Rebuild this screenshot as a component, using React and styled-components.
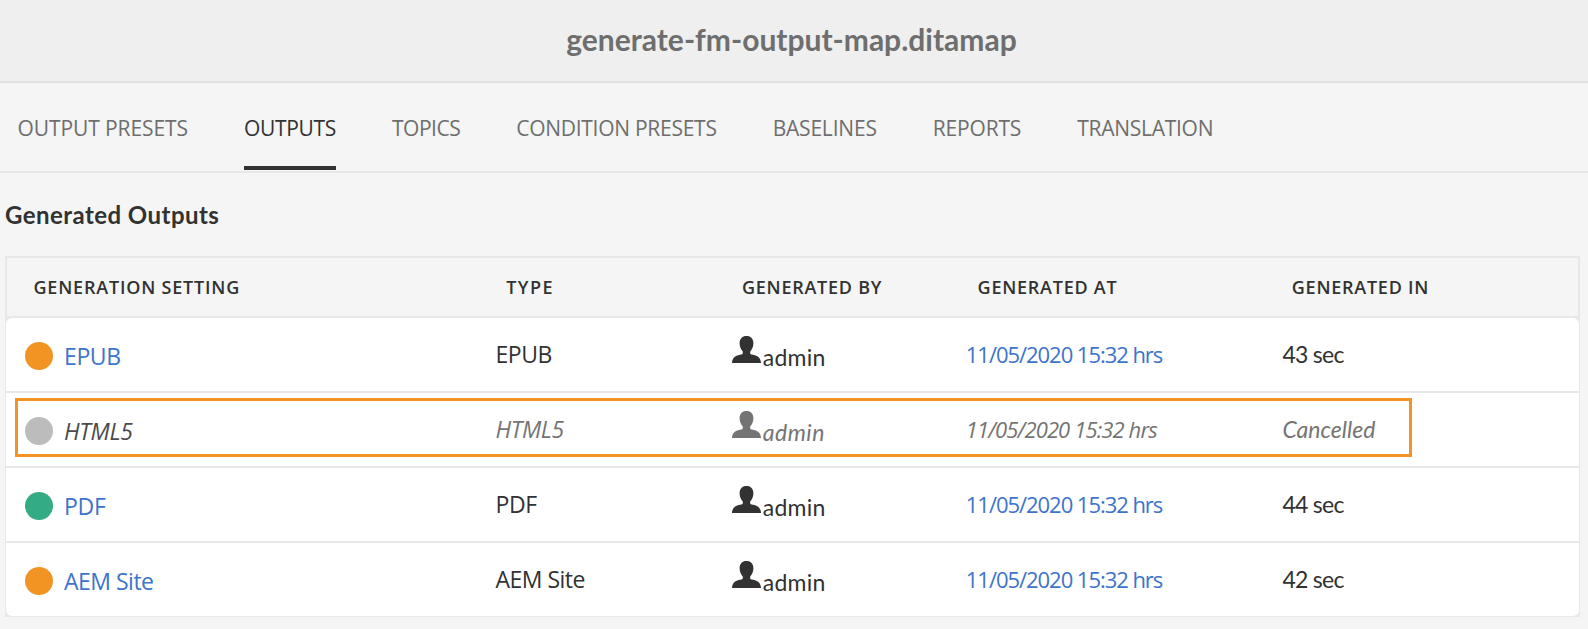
import React from "react";
import styled, { createGlobalStyle, css } from "styled-components";

const colors = {
  page: "#f5f5f5",
  header: "#efefef",
  headerLine: "#e1e1e1",
  line: "#e8e8e8",
  text: "#323232",
  muted: "#6e6e6e",
  disabled: "#747474",
  link: "#3d74cc",
  orange: "#f29423",
  green: "#33ab84",
  gray: "#bcbcbc",
};

const caps = `"Open Sans", "Noto Sans", sans-serif`;
const prose = `Lato, "Open Sans", sans-serif`;

const GlobalStyle = createGlobalStyle`
  *, *::before, *::after { box-sizing: border-box; }
  body {
    margin: 0;
    background: ${colors.page};
    color: ${colors.text};
    font-family: ${caps};
  }
`;

const Page = styled.div`
  min-height: 629px;
  display: flex;
  flex-direction: column;
  overflow: hidden;
`;

const TitleBar = styled.header`
  height: 83px;
  display: flex;
  align-items: center;
  justify-content: center;
  padding: 0 5px 3px 0;
  background: ${colors.header};
  border-bottom: 2px solid ${colors.headerLine};
`;

const Title = styled.h1`
  margin: 0;
  font: 700 30px/36px ${prose};
  color: ${colors.muted};
`;

const TabBar = styled.nav`
  height: 90px;
  display: flex;
  gap: 56px;
  padding: 0 17.5px 1px;
  border-bottom: 2px solid ${colors.line};
`;

const Tab = styled.a`
  display: flex;
  align-items: center;
  padding-top: 7px;
  border-bottom: 4px solid ${(p) => (p.$active ? colors.text : "transparent")};
  color: ${(p) => (p.$active ? colors.text : colors.muted)};
  font-size: 21px;
  line-height: 28px;
  letter-spacing: ${(p) => p.$track}px;
  white-space: nowrap;
`;

const Section = styled.main`
  padding: 26px 8px 12px 5px;
`;

const Heading = styled.h2`
  margin: 0 0 25px;
  font: 700 24px/32px ${prose};
  letter-spacing: 0.45px;
`;

const Table = styled.div`
  background: ${colors.line};
  padding: 0 1px 1px;
`;

const columns = css`
  display: grid;
  grid-template-columns: 30fr 15fr 15fr 20fr 20fr;
`;

const HeadRow = styled.div`
  ${columns}
  height: 62px;
  margin: 0 -1px;
  align-items: center;
  background: ${colors.page};
  border: 2px solid ${colors.line};
`;

const HeadCell = styled.div`
  padding-left: ${(p) => p.$pad || 28}px;
  font-size: 18px;
  font-weight: 600;
  line-height: 24px;
  letter-spacing: ${(p) => p.$track}px;
  white-space: nowrap;
`;

const Body = styled.div`
  background: #fff;
  border-radius: 6px;
`;

const Row = styled.div`
  ${columns}
  position: relative;
  height: 75px;
  align-items: center;
  border-bottom: 2px solid ${colors.line};
  color: ${(p) => (p.$cancelled ? colors.disabled : colors.text)};
  font-style: ${(p) => (p.$cancelled ? "italic" : "normal")};

  &:last-child {
    height: 73px;
    border-bottom: 0;
  }
`;

const Cell = styled.div`
  padding: 0 0 2px 17.5px;
  font-family: ${(p) => (p.$prose ? prose : caps)};
  font-size: 23px;
  line-height: 32px;
  letter-spacing: ${(p) => p.$track || 0}px;
  white-space: nowrap;
`;

const NameCell = styled(Cell)`
  display: flex;
  align-items: center;
  gap: 11px;
  padding: 3px 0 0 19px;
`;

const Dot = styled.span`
  width: 28px;
  height: 28px;
  border-radius: 50%;
  background: ${(p) => p.$color};
`;

const Name = styled.span`
  color: ${(p) => (p.$cancelled ? "#4b4b4b" : colors.link)};
`;

const DateCell = styled(Cell)`
  padding-left: 16px;
  font-size: 22px;
  color: ${(p) => (p.$cancelled ? colors.disabled : colors.link)};
`;

const DurationCell = styled(Cell)`
  padding-left: 18px;
`;

const UserCell = styled(Cell)`
  display: flex;
  align-items: flex-end;
  gap: 1.5px;
  padding: 0 0 1px 18.5px;
`;

const UserIcon = styled.svg`
  width: 29px;
  height: 27px;
  margin-bottom: 10px;
  fill: currentColor;
`;

const Callout = styled.div`
  position: absolute;
  left: 9px;
  top: 5px;
  width: 1397px;
  height: 59px;
  border: 3px solid ${colors.orange};
`;

const tabs = [
  { label: "OUTPUT PRESETS", track: -0.09 },
  { label: "OUTPUTS", track: -0.31, active: true },
  { label: "TOPICS", track: -0.5 },
  { label: "CONDITION PRESETS", track: -0.27 },
  { label: "BASELINES", track: -0.2 },
  { label: "REPORTS", track: -0.16 },
  { label: "TRANSLATION", track: -0.27 },
];

const headings = [
  { label: "GENERATION SETTING", track: 0.8, pad: 26.5 },
  { label: "TYPE", track: 1.4 },
  { label: "GENERATED BY", track: 0.75 },
  { label: "GENERATED AT", track: 0.75 },
  { label: "GENERATED IN", track: 0.75 },
];

const outputs = [
  { name: "EPUB", color: colors.orange, track: -0.4, duration: "43 sec" },
  { name: "HTML5", color: colors.gray, track: -0.3, duration: "Cancelled", cancelled: true },
  { name: "PDF", color: colors.green, track: -0.3, duration: "44 sec" },
  { name: "AEM Site", color: colors.orange, track: -0.5, duration: "42 sec" },
];

export default function App() {
  return (
    <Page>
      <GlobalStyle />
      <TitleBar>
        <Title>generate-fm-output-map.ditamap</Title>
      </TitleBar>
      <TabBar>
        {tabs.map((t) => (
          <Tab key={t.label} $active={t.active} $track={t.track}>{t.label}</Tab>
        ))}
      </TabBar>
      <Section>
        <Heading>Generated Outputs</Heading>
        <Table>
          <HeadRow>
            {headings.map((h) => (
              <HeadCell key={h.label} $track={h.track} $pad={h.pad}>{h.label}</HeadCell>
            ))}
          </HeadRow>
          <Body>
            {outputs.map((o) => (
              <Row key={o.name} $cancelled={o.cancelled}>
                <NameCell $track={o.track}>
                  <Dot $color={o.color} />
                  <Name $cancelled={o.cancelled}>{o.name}</Name>
                </NameCell>
                <Cell $track={o.track}>{o.name}</Cell>
                <UserCell $prose $track={o.cancelled ? 0.5 : 0.2}>
                  <UserIcon viewBox="0 0 29 27">
                    <path d="M14.500 0C10.300 0 7.600 2.700 7.600 7.200c0 3.200 1.200 6.200 3.200 8.200v1.500c0 .8-.5 1.300-1.300 1.500C4.800 19.200.6 20.400 0 26.400V27h29v-.6c-.6-6-4.800-7.200-9.500-8-.8-.2-1.300-.7-1.300-1.500v-1.500c2-2 3.200-5 3.200-8.200C21.400 2.700 18.700 0 14.500 0z" />
                  </UserIcon>
                  <span>admin</span>
                </UserCell>
                <DateCell $cancelled={o.cancelled} $track={o.cancelled ? -0.88 : -1.04}>
                  11/05/2020 15:32 hrs
                </DateCell>
                <DurationCell $prose $track={o.cancelled ? 0 : -0.7}>{o.duration}</DurationCell>
                {o.cancelled && <Callout />}
              </Row>
            ))}
          </Body>
        </Table>
      </Section>
    </Page>
  );
}
